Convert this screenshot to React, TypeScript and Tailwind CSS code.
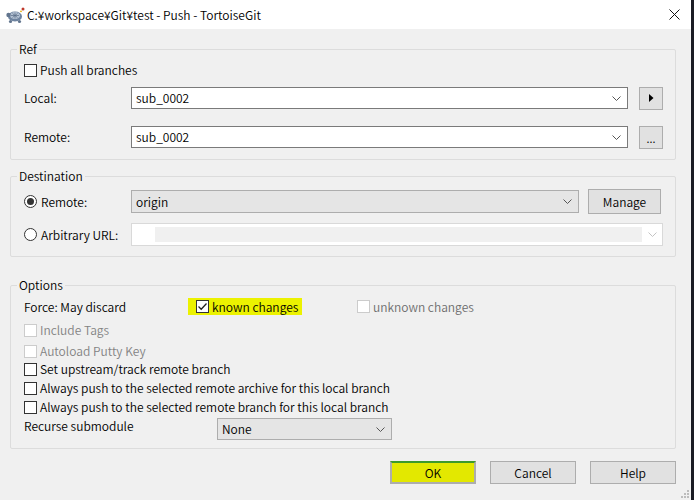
import React from "react";
import clsx from "clsx";

function Check({ checked = false, disabled = false }: { checked?: boolean; disabled?: boolean }) {
  return (
    <span
      className={clsx(
        "flex h-[13px] w-[13px] shrink-0 items-center justify-center border bg-white",
        disabled ? "border-[#cccccc]" : "border-[#333333]",
      )}
    >
      {checked && (
        <svg width="11" height="11" viewBox="0 0 11 11">
          <path d="M1.5 5.5 L4.2 8.2 L9.5 2.5" fill="none" stroke="#222" strokeWidth="1.3" />
        </svg>
      )}
    </span>
  );
}

function Radio({ checked = false }: { checked?: boolean }) {
  return (
    <span className="flex h-[13px] w-[13px] shrink-0 items-center justify-center rounded-full border border-[#333333] bg-white">
      {checked && <span className="h-[7px] w-[7px] rounded-full bg-[#333333]" />}
    </span>
  );
}

function Chevron({ color = "#555" }: { color?: string }) {
  return (
    <svg width="9" height="5" viewBox="0 0 9 5" className="shrink-0">
      <path d="M0.5 0.5 L4.5 4.5 L8.5 0.5" fill="none" stroke={color} strokeWidth="1" />
    </svg>
  );
}

function Combo({ value, width }: { value: string; width: string }) {
  return (
    <div
      className={clsx(
        "flex h-[22px] items-center border border-[#7a7a7a] bg-white pl-[4px] pr-[6px]",
        width,
      )}
    >
      <span className="flex-1">{value}</span>
      <Chevron />
    </div>
  );
}

function DropList({ value, width, height }: { value: string; width: string; height: string }) {
  return (
    <div
      className={clsx(
        "flex items-center border border-[#adadad] bg-[#e5e5e5] pl-[4px] pr-[6px]",
        width,
        height,
      )}
    >
      <span className="flex-1">{value}</span>
      <Chevron />
    </div>
  );
}

function CheckRow({ label, disabled = false, className }: { label: string; disabled?: boolean; className?: string }) {
  return (
    <div className={clsx("flex h-[16px] items-center", className)}>
      <Check disabled={disabled} />
      <span className={clsx("ml-[3px]", disabled && "text-[#838383]")}>{label}</span>
    </div>
  );
}

function Group({ title, children, className }: { title: string; children: React.ReactNode; className?: string }) {
  return (
    <fieldset className={clsx("w-[666px] rounded-[2px] border border-[#dcdcdc]", className)}>
      <legend className="ml-[6px] px-[2px] leading-[16px]">{title}</legend>
      {children}
    </fieldset>
  );
}

function Btn({ children, className }: { children: React.ReactNode; className?: string }) {
  return (
    <div
      className={clsx(
        "flex h-[23px] items-center justify-center border border-[#adadad] bg-[#e1e1e1]",
        className,
      )}
    >
      {children}
    </div>
  );
}

function TurtleIcon() {
  return (
    <svg width="20" height="18" viewBox="0 0 20 18">
      <ellipse cx="9" cy="10.5" rx="7" ry="5" fill="#6f84a0" />
      <ellipse cx="9" cy="9.5" rx="5" ry="3.6" fill="#b3c1d3" />
      <path d="M5 9.5 L13 9.5 M9 6.5 L9 12.5 M6.5 7.5 L11.5 11.5 M11.5 7.5 L6.5 11.5" stroke="#5a6d86" strokeWidth="0.7" />
      <circle cx="2.5" cy="9" r="2.2" fill="#62758e" />
      <circle cx="4.5" cy="15.5" r="1.6" fill="#62758e" />
      <circle cx="13.5" cy="15.5" r="1.6" fill="#62758e" />
      <circle cx="17" cy="3" r="1.5" fill="#c0392b" />
      <circle cx="15" cy="5.3" r="0.9" fill="#e6b000" />
    </svg>
  );
}

export default function App() {
  return (
    <div className="flex h-[500px] w-[694px] bg-[#1b1c24] font-['Noto_Sans_CJK_JP',sans-serif] text-[12px] font-[350] leading-[16px] text-black">
      <div className="relative flex h-full w-[691px] flex-col bg-[#f0f0f0]">
        {/* title bar */}
        <div className="flex h-[29px] items-center bg-white pl-[6px] pr-[10px]">
          <TurtleIcon />
          <span className="ml-[1px]">C:¥workspace¥Git¥test - Push - TortoiseGit</span>
          <svg width="11" height="11" viewBox="0 0 11 11" className="ml-auto mr-[1px]">
            <path d="M0.5 0.5 L10.5 10.5 M10.5 0.5 L0.5 10.5" stroke="#111" strokeWidth="1" />
          </svg>
        </div>

        <div className="pl-[10px] pt-[12px]">
          <Group title="Ref">
            <div className="pb-[10px] pl-[13px] pt-[5px]">
              <CheckRow label="Push all branches" />
              <div className="mt-[8px] flex h-[24px] items-center">
                <span className="w-[107px]">Local:</span>
                <Combo value="sub_0002" width="w-[497px]" />
                <Btn className="ml-[11px] h-[23px] w-[24px]">
                  <svg width="5" height="8" viewBox="0 0 5 8">
                    <path d="M0 0 L4.5 4 L0 8 Z" fill="#000" />
                  </svg>
                </Btn>
              </div>
              <div className="mt-[15px] flex h-[24px] items-center">
                <span className="w-[107px]">Remote:</span>
                <Combo value="sub_0002" width="w-[497px]" />
                <Btn className="ml-[11px] w-[24px] items-end pb-[4px] text-[11px] leading-[11px]">...</Btn>
              </div>
            </div>
          </Group>

          <Group title="Destination" className="mt-[8px]">
            <div className="pb-[10px] pl-[13px] pt-[5px]">
              <div className="flex h-[25px] items-center">
                <div className="flex w-[107px] items-center">
                  <Radio checked />
                  <span className="ml-[4px]">Remote:</span>
                </div>
                <DropList value="origin" width="w-[448px]" height="h-[23px]" />
                <Btn className="ml-[9px] h-[25px] w-[73px]">Manage</Btn>
              </div>
              <div className="mt-[9px] flex h-[23px] items-center">
                <div className="flex w-[107px] items-center">
                  <Radio />
                  <span className="ml-[4px]">Arbitrary URL:</span>
                </div>
                <div className="flex h-[23px] w-[532px] items-center border border-[#d9d9d9] bg-white pl-[23px] pr-[5px]">
                  <div className="h-[15px] flex-1 bg-[#f0f0f0]" />
                  <span className="ml-[6px]">
                    <Chevron color="#c4c4c4" />
                  </span>
                </div>
              </div>
            </div>
          </Group>

          <Group title="Options" className="mt-[20px]">
            <div className="pb-[8px] pl-[13px] pt-[5px]">
              <div className="flex h-[17px] items-center">
                <span className="w-[164px]">Force: May discard</span>
                <div className="w-[169px]">
                  <div className="flex h-[17px] w-[114px] items-center bg-[#ecf200] pl-[8px]">
                    <Check checked />
                    <span className="ml-[3px]">known changes</span>
                  </div>
                </div>
                <Check disabled />
                <span className="ml-[3px] text-[#6d6d6d]">unknown changes</span>
              </div>
              <CheckRow label="Include Tags" disabled className="mt-[7px]" />
              <CheckRow label="Autoload Putty Key" disabled className="mt-[5px]" />
              <CheckRow label="Set upstream/track remote branch" className="mt-[2px]" />
              <CheckRow label="Always push to the selected remote archive for this local branch" className="mt-[3px]" />
              <CheckRow label="Always push to the selected remote branch for this local branch" className="mt-[3px]" />
              <div className="mt-[3px] flex h-[22px] items-start">
                <span className="w-[193px]">Recurse submodule</span>
                <DropList value="None" width="w-[175px]" height="h-[22px]" />
              </div>
            </div>
          </Group>

          <div className="mt-[12px] flex w-[666px] justify-end gap-[14px]">
            <Btn className="w-[86px] border-2 border-[#0078d7] border-t-[#3d9a2a] bg-[#e3e800]">OK</Btn>
            <Btn className="w-[86px]">Cancel</Btn>
            <Btn className="w-[86px]">Help</Btn>
          </div>
        </div>

        {/* resize grip */}
        <div className="absolute bottom-[2px] right-[2px] grid grid-cols-3 gap-[1px]">
          <span />
          <span />
          <span className="h-[2px] w-[2px] bg-[#bcbcbc]" />
          <span />
          <span className="h-[2px] w-[2px] bg-[#bcbcbc]" />
          <span className="h-[2px] w-[2px] bg-[#bcbcbc]" />
          <span className="h-[2px] w-[2px] bg-[#bcbcbc]" />
          <span className="h-[2px] w-[2px] bg-[#bcbcbc]" />
          <span className="h-[2px] w-[2px] bg-[#bcbcbc]" />
        </div>
      </div>
      <div className="flex-1 bg-[#1b1c24]" />
    </div>
  );
}
